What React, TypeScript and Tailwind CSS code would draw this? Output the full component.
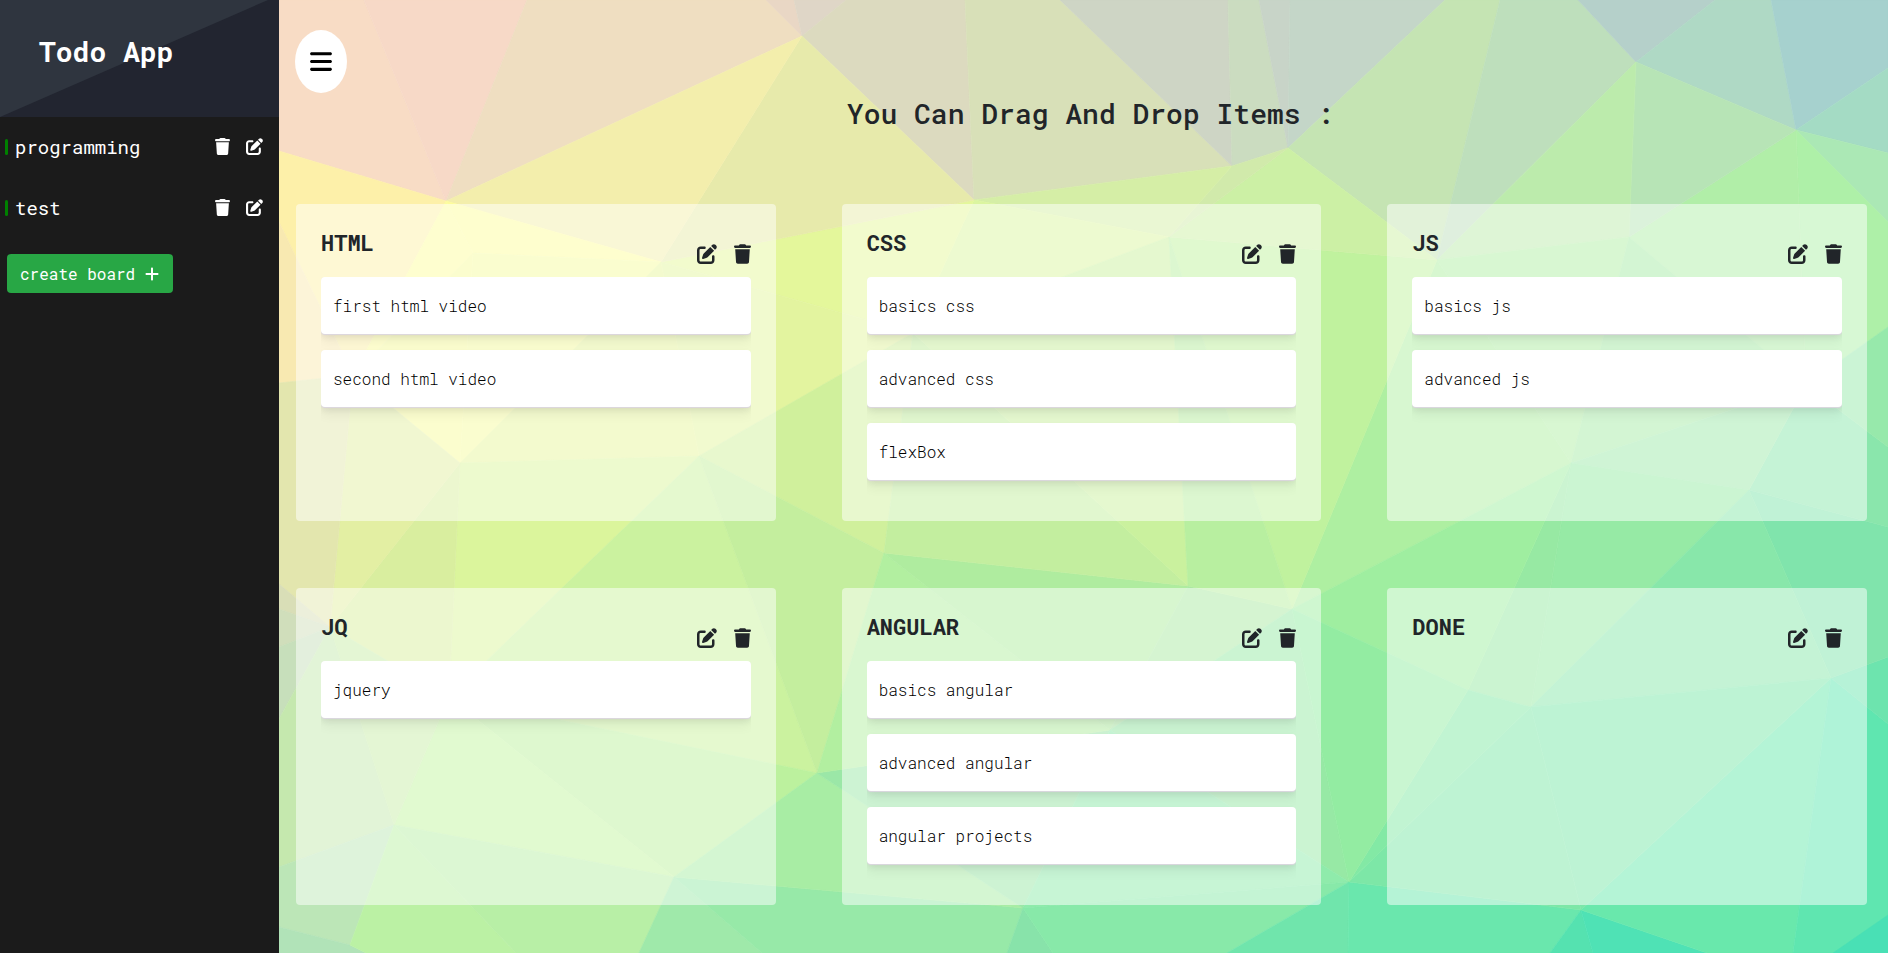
import React from "react";
import { FaBars, FaPenToSquare, FaPlus, FaTrash } from "react-icons/fa6";

type Point = [number, number];

const vertices: Record<string, Point> = {
  A: [446, 201], B: [802, 36], C: [661, 262], D: [460, 463], E: [699, 456],
  F: [353, 375], G: [473, 253], H: [974, 200], I: [913, 333], J: [1169, 237],
  K: [1188, 586], L: [884, 553], M: [817, 773], N: [1232, 166], O: [1288, 148],
  P: [1292, 609], Q: [1437, 260], R: [1636, 62], S: [1796, 130], T: [1629, 237],
  U: [1806, 385], V: [1571, 463], W: [1749, 490], X: [1468, 690], Y: [1531, 707],
  Z: [1349, 882], AA: [1831, 678], BB: [1581, 910], CC: [1110, 730], DD: [1023, 908],
  EE: [674, 877], FF: [394, 825], GG: [350, 945], HH: [330, 627], II: [449, 697],
};

/* t = top edge, b = bottom edge, l = left edge, r = right edge */
function resolve(name: string): Point {
  const offset = Number(name.slice(1));
  if (name[0] === "t") return [offset, 0];
  if (name[0] === "b") return [offset, 953];
  if (name[0] === "l") return [279, offset];
  if (name[0] === "r") return [1888, offset];
  return vertices[name];
}

const facets: [string, string][] = [
  ["t279 t364 A l151", "#f8dcc5"],
  ["t364 t527 A", "#f7d9c7"],
  ["t527 t766 B A", "#efdec1"],
  ["t766 t794 B", "#e9d7c5"],
  ["t794 t846 B", "#dfd6c7"],
  ["t846 t965 H B", "#dcdabf"],
  ["t965 t1060 N H", "#d8e0b8"],
  ["t1060 t1228 N", "#ced5c5"],
  ["t1228 t1259 O N", "#cbdcc0"],
  ["t1259 t1290 O", "#c8d4c8"],
  ["t1290 t1445 O", "#c4d6c8"],
  ["t1445 t1500 Q O", "#c5e4b3"],
  ["t1500 t1578 R Q", "#bedfbc"],
  ["t1578 t1715 R", "#b5d0ca"],
  ["t1715 t1771 S R", "#afd9c5"],
  ["t1771 t1888 r68 S", "#a6d1ce"],
  ["r68 r153 S", "#a4dbc4"],
  ["r153 r222 S", "#abe8b5"],
  ["S r222 r327 U", "#aef0a8"],
  ["S U T", "#b1eea8"],
  ["R S T", "#b7e4b6"],
  ["Q R T", "#bcebac"],
  ["Q T V", "#b1efa5"],
  ["T U V", "#a7eba6"],
  ["Q V P", "#aeefa1"],
  ["J Q P", "#c0f29e"],
  ["J O Q", "#ccf0a5"],
  ["J N O", "#d1eaab"],
  ["H N J", "#d5eea6"],
  ["H J I", "#dbf5a0"],
  ["C H I", "#e4f79b"],
  ["C I E", "#e3f49f"],
  ["I E L", "#d0f09c"],
  ["B C H", "#e7eaab"],
  ["A B C", "#f3eeac"],
  ["A C G", "#fdfc9c"],
  ["l151 A F l222", "#fdf0a9"],
  ["l222 F l383", "#f8e9b1"],
  ["A G F", "#fcfc9e"],
  ["G C D", "#f5fb9f"],
  ["G F D", "#f7fb9d"],
  ["C D E", "#e7f59c"],
  ["D E II", "#dbf59c"],
  ["E M II", "#cbf29f"],
  ["E L M", "#c4ee9e"],
  ["II M EE", "#bcf19e"],
  ["II EE FF", "#c2f4a0"],
  ["D II HH", "#d9ee9f"],
  ["F D HH", "#e3efa3"],
  ["F HH l584 l383", "#e3e6ae"],
  ["HH l584 l609", "#d9deb7"],
  ["HH l609 l647", "#d0debb"],
  ["HH l647 l719", "#c7dfbb"],
  ["HH l719 l867 FF", "#c5e8ae"],
  ["HH FF II", "#c8eda8"],
  ["FF l867 l927 GG", "#bce6b7"],
  ["GG l927 b279 b366", "#b1e3b8"],
  ["FF GG b366 b516", "#bbf1a4"],
  ["FF b516 b639 EE", "#b8efa6"],
  ["EE b639 b762", "#9fe9aa"],
  ["EE b762 b1007 DD", "#97e9a8"],
  ["DD b1007 b1053", "#88e3aa"],
  ["M EE DD", "#a8eda4"],
  ["M DD CC", "#9be7a7"],
  ["L M CC", "#b2efa0"],
  ["L K CC", "#afec9f"],
  ["K P CC", "#abe9a3"],
  ["CC P Z", "#97e9a5"],
  ["CC DD Z", "#8febab"],
  ["DD b1053 b1227 Z", "#88e9a9"],
  ["Z b1227 b1348", "#70e5ac"],
  ["Z b1348 b1550 BB", "#6ae7ad"],
  ["BB b1550 b1593", "#55e2b0"],
  ["BB b1593 b1707", "#4fe2b5"],
  ["BB b1707 b1793 AA", "#69e8ac"],
  ["AA b1793 b1888 r724", "#5fe6b0"],
  ["r915 b1888 b1833", "#49e0b5"],
  ["AA r724 r657", "#6de4ae"],
  ["W AA r657 r527", "#80e4ac"],
  ["U W r527 r447", "#8ae6ac"],
  ["U r327 r447", "#97e9ab"],
  ["U V W", "#9fe9ab"],
  ["W V Y", "#96eaa5"],
  ["V Y X", "#97e9a3"],
  ["V P X", "#9feea0"],
  ["W Y AA", "#88e7aa"],
  ["Y AA BB", "#7be7a9"],
  ["Y Z BB", "#7de7a7"],
  ["X Y Z", "#83e9a5"],
  ["P X Z", "#93eca2"],
  ["I L K", "#c3ee9f"],
  ["I K J", "#caf19e"],
  ["J K P", "#b8efa0"],
];

function Backdrop() {
  return (
    <svg
      className="absolute inset-0 h-full w-full"
      viewBox="279 0 1609 953"
      preserveAspectRatio="none"
      aria-hidden="true"
    >
      {facets.map(([names, color]) => (
        <polygon
          key={names}
          points={names.split(" ").map((n) => resolve(n).join(",")).join(" ")}
          fill={color}
          stroke={color}
          strokeWidth="0.6"
        />
      ))}
    </svg>
  );
}

const boards = ["programming", "test"];

const columns = [
  { title: "HTML", items: ["first html video", "second html video"] },
  { title: "CSS", items: ["basics css", "advanced css", "flexBox"] },
  { title: "JS", items: ["basics js", "advanced js"] },
  { title: "JQ", items: ["jquery"] },
  { title: "ANGULAR", items: ["basics angular", "advanced angular", "angular projects"] },
  { title: "DONE", items: [] },
];

function Sidebar() {
  return (
    <aside className="w-[279px] shrink-0 bg-[#1b1b1b] text-white">
      <header className="relative h-[117px] bg-[#222530] px-[39px] pt-8">
        <svg
          className="absolute inset-0 h-full w-full"
          viewBox="0 0 279 117"
          preserveAspectRatio="none"
          aria-hidden="true"
        >
          <polygon points="0,0 268,0 0,117" fill="#2f353f" />
        </svg>
        <h1 className="relative text-[28px] leading-10 font-bold">Todo App</h1>
      </header>
      <ul>
        {boards.map((board) => (
          <li key={board} className="flex h-[61px] items-center pr-4 pb-0.5 pl-[5px]">
            <span className="h-4 w-[3px] rounded-xs bg-[#008000]" />
            <a href="#" className="ml-[7px] flex-1 text-[19px] leading-7">
              {board}
            </a>
            <button type="button" aria-label={`Delete ${board}`} className="mr-4">
              <FaTrash className="h-[17px] w-[15px]" />
            </button>
            <button type="button" aria-label={`Edit ${board}`}>
              <FaPenToSquare className="size-[17px]" />
            </button>
          </li>
        ))}
      </ul>
      <button
        type="button"
        className="mt-[15px] ml-[7px] flex h-[39px] items-center gap-[9px] rounded bg-[#28a745] px-[13px] text-base"
      >
        create board
        <FaPlus className="size-4" />
      </button>
    </aside>
  );
}

function Column({ title, items }: { title: string; items: string[] }) {
  return (
    <section className="min-h-[317px] rounded bg-white/50 px-[25px] pt-[25px] pb-5">
      <div className="flex h-12 items-start justify-between">
        <h3 className="text-[22px] leading-7 font-bold">{title}</h3>
        <div className="flex gap-[17px] pt-[15px]">
          <button type="button" aria-label={`Edit ${title}`}>
            <FaPenToSquare className="size-5" />
          </button>
          <button type="button" aria-label={`Delete ${title}`}>
            <FaTrash className="h-5 w-[17px]" />
          </button>
        </div>
      </div>
      <ul className="flex flex-col gap-4 overflow-hidden pb-4">
        {items.map((item) => (
          <li
            key={item}
            draggable
            className="flex h-[57px] items-center rounded bg-white px-3 text-base font-light text-black shadow-[0_1px_1px_#dcd6e0,0_3px_6px_rgba(0,0,0,0.07),0_8px_12px_rgba(0,0,0,0.05)]"
          >
            {item}
          </li>
        ))}
      </ul>
    </section>
  );
}

export default function App() {
  return (
    <div className="flex min-h-screen font-['Roboto_Mono','Liberation_Mono',monospace] text-[#212529]">
      <Sidebar />
      <main className="relative isolate min-w-0 flex-1">
        <div className="absolute inset-0 -z-10">
          <Backdrop />
        </div>
        <div className="pt-[30px] pr-[21px] pb-10 pl-[17px]">
          <button
            type="button"
            aria-label="Toggle menu"
            className="-ml-px flex h-[63px] w-[52px] items-center justify-center rounded-[50%] bg-white text-black"
          >
            <FaBars className="h-[25px] w-[22px]" />
          </button>
          <h2 className="pl-[18px] text-center text-[28px] leading-[42px] font-medium">
            You Can Drag And Drop Items :
          </h2>
          <div className="mt-[69px] grid grid-cols-3 gap-x-[66px] gap-y-[67px]">
            {columns.map((column) => (
              <Column key={column.title} {...column} />
            ))}
          </div>
        </div>
      </main>
    </div>
  );
}
